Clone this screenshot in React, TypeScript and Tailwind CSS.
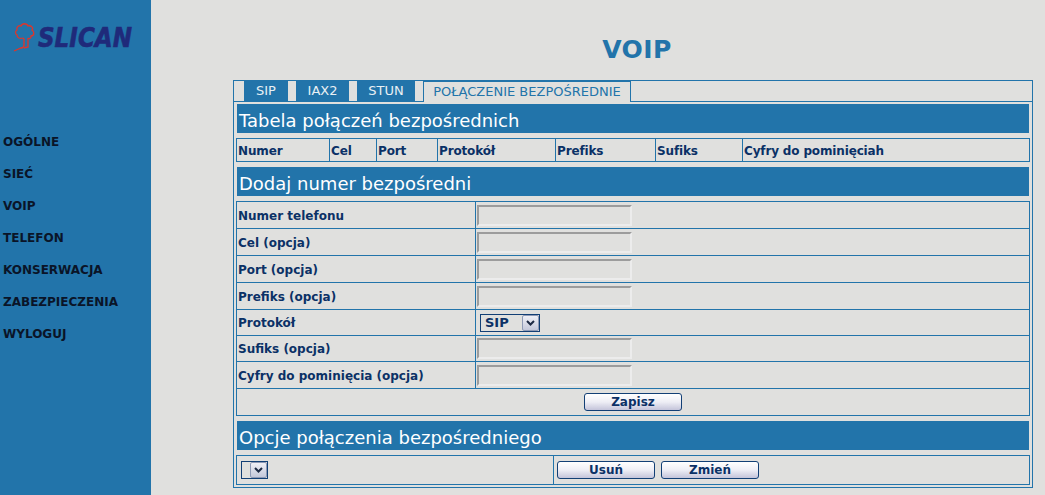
const navItems = ["OGÓLNE", "SIEĆ", "VOIP", "TELEFON", "KONSERWACJA", "ZABEZPIECZENIA", "WYLOGUJ"];
const columns = [
  { label: "Numer", width: "w-[93px]" },
  { label: "Cel", width: "w-[47px]" },
  { label: "Port", width: "w-[61px]" },
  { label: "Protokół", width: "w-[118px]" },
  { label: "Prefiks", width: "w-[100px]" },
  { label: "Sufiks", width: "w-[87px]" },
  { label: "Cyfry do pominięciah", width: "" },
];

function Logo() {
  return (
    <svg width="130" height="36" viewBox="0 0 130 36" className="block">
      <g fill="none" stroke="#e0352a" strokeWidth="1.3">
        <path d="M10 16C7 17 4 16 4 13C2 12 2 9 4 8C3 5 6 3 8 4C9 1 14 1 15 4C18 3 21 6 19 8C22 10 21 14 18 14C18 17 16 17 15 16" />
        <path d="M10 16l1 1v6c0 2-1 3-3 3l-7 3" />
        <path d="M15 16v9l-4 1" />
      </g>
      <text x="25" y="25" fill="#1f2a7a" stroke="#1f2a7a" strokeWidth="0.6" fontFamily="'DejaVu Sans', sans-serif" fontSize="26" fontWeight="700" fontStyle="italic" textLength="94" lengthAdjust="spacingAndGlyphs">
        SLICAN
      </text>
    </svg>
  );
}

function SectionHeader({ children }: { children: string }) {
  return (
    <h2 className="mr-px ml-px h-[29px] bg-[#2274aa] pl-[2px] text-[18px] leading-[33px] font-normal text-white">
      {children}
    </h2>
  );
}

function TextField() {
  return (
    <input
      type="text"
      className="block h-[21px] w-[155px] border-2 border-t-[#9c9c9c] border-r-[#ececec] border-b-[#ececec] border-l-[#9c9c9c] bg-[#e0e0de]"
    />
  );
}

function Arrow() {
  return (
    <span className="flex h-[16px] w-[17px] items-center justify-center rounded-[2px] border border-[#8f9ab5] bg-gradient-to-b from-[#f0f0f6] to-[#c4c8da]">
      <svg width="9" height="6" viewBox="0 0 9 6">
        <path d="M1 1l3.5 3.5L8 1" fill="none" stroke="#1d2a44" strokeWidth="2" />
      </svg>
    </span>
  );
}

function Btn({ children }: { children: string }) {
  return (
    <button className="h-[18px] w-[98px] rounded-[3px] border border-[#123f75] bg-gradient-to-b from-[#ffffff] via-[#eeeef5] to-[#c4c4da] text-[12px] leading-[14px] font-bold text-[#0b3166]">
      {children}
    </button>
  );
}

function Row({ label, height, children }: { label: string; height: string; children: React.ReactNode }) {
  return (
    <tr className={height}>
      <td className="w-[239px] border border-[#2274aa] pt-px pl-px text-[12px] font-bold text-[#0b3166]">{label}</td>
      <td className="border border-[#2274aa] px-[1px]">{children}</td>
    </tr>
  );
}

export default function App() {
  return (
    <div className="flex h-[495px] w-[1045px] overflow-hidden bg-[#e0e0de] font-['DejaVu_Sans',sans-serif]">
      <aside className="w-[151px] shrink-0 bg-[#2274aa]">
        <div className="ml-[13px] h-[58px] pt-[22px]">
          <Logo />
        </div>
        <nav className="mt-[68px] flex flex-col pl-[3px]">
          {navItems.map((item) => (
            <a key={item} className="h-[32px] text-[12px] leading-[32px] font-bold text-[#0a1428]">
              {item}
            </a>
          ))}
        </nav>
      </aside>

      <main className="ml-[82px] w-[800px]">
        <h1 className="h-[80px] pt-[35px] pl-[8px] text-center text-[25px] leading-[30px] tracking-[0.4px] font-bold text-[#2274aa]">VOIP</h1>

        <div className="h-[408px] border border-[#2274aa] px-[2px]">
          <div className="flex h-[20px] items-stretch gap-[8px] pl-[8px] text-[13px]">
            <div className="flex w-[44px] items-center justify-center bg-[#2274aa] text-[#e8f0f4]">SIP</div>
            <div className="flex w-[53px] items-center justify-center bg-[#2274aa] text-[#e8f0f4]">IAX2</div>
            <div className="flex w-[58px] items-center justify-center bg-[#2274aa] text-[#e8f0f4]">STUN</div>
            <div className="flex h-[21px] w-[208px] items-center justify-center border border-b-0 border-[#2274aa] bg-[#e0e0de] text-[#2274aa]">
              POŁĄCZENIE BEZPOŚREDNIE
            </div>
          </div>
          <div className="mx-[-2px] h-px bg-[#2274aa]" />

          <div className="mt-[2px]">
            <SectionHeader>Tabela połączeń bezpośrednich</SectionHeader>
          </div>

          <table className="mt-[5px] w-[794px] table-fixed border-collapse">
            <tbody>
              <tr className="h-[23px]">
                {columns.map((c) => (
                  <td key={c.label} className={`${c.width} border border-[#2274aa] pt-px pl-px text-[12px] tracking-[-0.15px] font-bold text-[#0b3166]`}>
                    {c.label}
                  </td>
                ))}
              </tr>
            </tbody>
          </table>

          <div className="mt-[5px]">
            <SectionHeader>Dodaj numer bezpośredni</SectionHeader>
          </div>

          <table className="mt-[5px] w-[794px] border-collapse">
            <tbody>
              <Row height="h-[27px]" label="Numer telefonu"><TextField /></Row>
              <Row height="h-[27px]" label="Cel (opcja)"><TextField /></Row>
              <Row height="h-[27px]" label="Port (opcja)"><TextField /></Row>
              <Row height="h-[27px]" label="Prefiks (opcja)"><TextField /></Row>
              <Row height="h-[26px]" label="Protokół">
                <div className="ml-[3px] flex h-[18px] w-[60px] items-center justify-between border border-[#123f75] pl-[4px] text-[13px] font-bold text-[#0b3166]">
                  SIP
                  <Arrow />
                </div>
              </Row>
              <Row height="h-[26px]" label="Sufiks (opcja)"><TextField /></Row>
              <Row height="h-[27px]" label="Cyfry do pominięcia (opcja)"><TextField /></Row>
              <tr className="h-[27px]">
                <td colSpan={2} className="border border-[#2274aa] text-center">
                  <div className="flex justify-center">
                    <Btn>Zapisz</Btn>
                  </div>
                </td>
              </tr>
            </tbody>
          </table>

          <div className="mt-[5px]">
            <SectionHeader>Opcje połączenia bezpośredniego</SectionHeader>
          </div>

          <table className="mt-[5px] w-[794px] border-collapse">
            <tbody>
              <tr className="h-[29px]">
                <td className="w-[317px] border border-[#2274aa] pl-[4px]">
                  <div className="flex h-[18px] w-[27px] items-center justify-end border border-[#123f75]">
                    <Arrow />
                  </div>
                </td>
                <td className="border border-[#2274aa] pl-[3px]">
                  <div className="flex gap-[6px]">
                    <Btn>Usuń</Btn>
                    <Btn>Zmień</Btn>
                  </div>
                </td>
              </tr>
            </tbody>
          </table>
        </div>
      </main>
    </div>
  );
}
